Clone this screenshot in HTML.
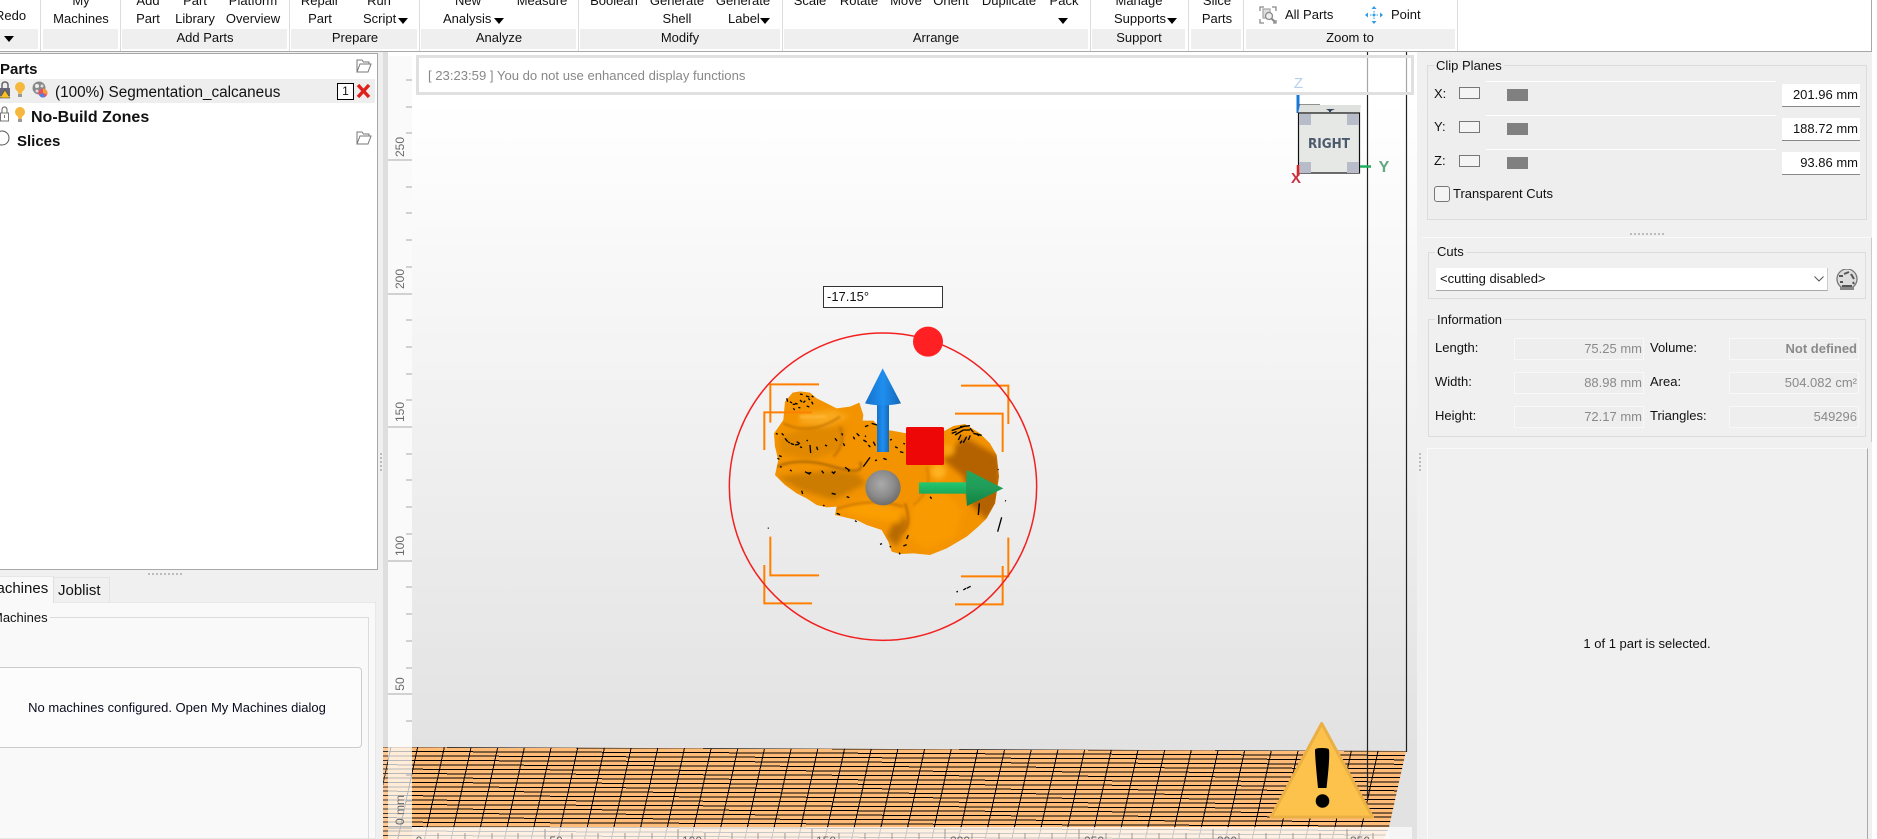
<!DOCTYPE html>
<html><head><meta charset="utf-8"><title>Magics</title>
<style>
html,body{margin:0;padding:0;background:#fff}
body{width:1877px;height:839px;position:relative;overflow:hidden;font-family:"Liberation Sans",sans-serif;font-size:13px;color:#111}
.a{position:absolute;box-sizing:border-box}
.t{position:absolute;white-space:nowrap;line-height:20px;height:20px}
.c{position:absolute;white-space:nowrap;line-height:20px;height:20px;width:400px;margin-left:-200px;text-align:center}
.s{position:absolute;top:29px;height:20px;background:#efefef}
.sep{position:absolute;top:0;height:51px;width:1px;background:#dcdcdc}
.arr{position:absolute;width:0;height:0;border-left:5px solid transparent;border-right:5px solid transparent;border-top:6px solid #000}
.g{position:absolute;box-sizing:border-box;border:1px solid #dcdcdc}
.lg{position:absolute;background:#eee;padding:0 2px;white-space:nowrap;line-height:16px;height:16px}
.vb{position:absolute;box-sizing:border-box;width:130px;height:22px;border:1px solid #f8f8f8;background:#eee;color:#8a8a8a;text-align:right;padding-right:1px;line-height:19px}
.inp{position:absolute;box-sizing:border-box;left:1782px;width:78px;height:23px;background:#fff;border-bottom:1px solid #888;text-align:right;padding-right:2px;line-height:22px}
.rt{position:absolute;transform:rotate(-90deg);transform-origin:center;font-size:12px;color:#6a6a6a;width:40px;height:14px;line-height:14px;text-align:center}
.dots{position:absolute;background-image:radial-gradient(circle,#aaa 0.8px,transparent 1px)}
</style></head><body>

<!-- toolbar -->
<div class="a" style="left:0;top:0;width:1872px;height:52px;background:#fff;border-bottom:1px solid #a8a8a8"></div>
<div class="a" style="left:1871px;top:0;width:1px;height:52px;background:#a8a8a8"></div>
<div class="s" style="left:0;width:38px"></div>
<div class="s" style="left:43px;width:75px"></div>
<div class="s" style="left:122px;width:165px"></div>
<div class="s" style="left:291px;width:126px"></div>
<div class="s" style="left:421px;width:155px"></div>
<div class="s" style="left:580px;width:200px"></div>
<div class="s" style="left:784px;width:304px"></div>
<div class="s" style="left:1092px;width:93px"></div>
<div class="s" style="left:1191px;width:50px"></div>
<div class="s" style="left:1246px;width:209px"></div>
<div class="sep" style="left:40px"></div><div class="sep" style="left:120px"></div><div class="sep" style="left:289px"></div><div class="sep" style="left:419px"></div><div class="sep" style="left:578px"></div><div class="sep" style="left:782px"></div><div class="sep" style="left:1090px"></div><div class="sep" style="left:1188px"></div><div class="sep" style="left:1243px"></div><div class="sep" style="left:1457px"></div>

<div class="t" style="left:-5px;top:6px">Redo</div><div class="arr" style="left:4px;top:36px"></div>
<div class="c" style="left:81px;top:-9px">My</div><div class="c" style="left:81px;top:9px">Machines</div>
<div class="c" style="left:148px;top:-9px">Add</div><div class="c" style="left:148px;top:9px">Part</div>
<div class="c" style="left:195px;top:-9px">Part</div><div class="c" style="left:195px;top:9px">Library</div>
<div class="c" style="left:253px;top:-9px">Platform</div><div class="c" style="left:253px;top:9px">Overview</div>
<div class="c" style="left:320px;top:-9px">Repair</div><div class="c" style="left:320px;top:9px">Part</div>
<div class="c" style="left:379px;top:-9px">Run</div><div class="t" style="left:363px;top:9px">Script</div><div class="arr" style="left:398px;top:18px"></div>
<div class="c" style="left:468px;top:-9px">New</div><div class="t" style="left:443px;top:9px">Analysis</div><div class="arr" style="left:494px;top:18px"></div>
<div class="c" style="left:542px;top:-9px">Measure</div>
<div class="c" style="left:614px;top:-9px">Boolean</div>
<div class="c" style="left:677px;top:-9px">Generate</div><div class="c" style="left:677px;top:9px">Shell</div>
<div class="c" style="left:743px;top:-9px">Generate</div><div class="t" style="left:728px;top:9px">Label</div><div class="arr" style="left:760px;top:18px"></div>
<div class="c" style="left:810px;top:-9px">Scale</div>
<div class="c" style="left:859px;top:-9px">Rotate</div>
<div class="c" style="left:906px;top:-9px">Move</div>
<div class="c" style="left:951px;top:-9px">Orient</div>
<div class="c" style="left:1009px;top:-9px">Duplicate</div>
<div class="c" style="left:1064px;top:-9px">Pack</div><div class="arr" style="left:1058px;top:18px"></div>
<div class="c" style="left:1139px;top:-9px">Manage</div><div class="t" style="left:1114px;top:9px">Supports</div><div class="arr" style="left:1167px;top:18px"></div>
<div class="c" style="left:1217px;top:-9px">Slice</div><div class="c" style="left:1217px;top:9px">Parts</div>
<div class="t" style="left:1285px;top:5px">All Parts</div>
<div class="t" style="left:1391px;top:5px">Point</div>
<svg class="a" style="left:1258px;top:5px" width="20" height="20" viewBox="0 0 20 20" fill="none" stroke="#8a8a8a" stroke-width="1.3"><path d="M2 6V2h4M14 2h4v4M2 14v4h4M18 15v3h-3"/><rect x="5" y="4" width="7" height="9" fill="#ddd" stroke="#aaa"/><circle cx="11" cy="11" r="3.5" fill="#eee"/><path d="M13.5 13.5l3.5 3.5" stroke-width="2"/></svg>
<svg class="a" style="left:1365px;top:6px" width="18" height="18" viewBox="0 0 18 18" fill="#2f9be8"><circle cx="9" cy="9" r="1.5"/><path d="M9 0l2.5 3h-5zM9 18l-2.5-3h5zM0 9l3-2.5v5zM18 9l-3 2.5v-5z"/><path d="M5 8.5h1.5v1H5zM11.500 8.500H13v1h-1.500zM8.500 5h1v1.500h-1zM8.500 11.500h1V13h-1z"/></svg>
<div class="c" style="left:205px;top:28px">Add Parts</div>
<div class="c" style="left:355px;top:28px">Prepare</div>
<div class="c" style="left:499px;top:28px">Analyze</div>
<div class="c" style="left:680px;top:28px">Modify</div>
<div class="c" style="left:936px;top:28px">Arrange</div>
<div class="c" style="left:1139px;top:28px">Support</div>
<div class="c" style="left:1350px;top:28px">Zoom to</div>

<!-- backgrounds -->
<div class="a" style="left:0;top:52px;width:383px;height:787px;background:#f0f0f0"></div>
<div class="a" style="left:1417px;top:52px;width:455px;height:787px;background:#f0f0f0"></div>

<!-- parts panel -->
<div class="a" style="left:0;top:53px;width:378px;height:517px;background:#fff;border-right:1px solid #a8a8a8;border-bottom:1px solid #a8a8a8;border-top:1px solid #a8a8a8"></div>
<div class="a" style="left:0;top:79px;width:375px;height:24px;background:#eee"></div>
<div class="t" style="left:0;top:60px;font-weight:bold;font-size:15px">Parts</div>
<div class="t" style="left:55px;top:83px;font-size:15.300px">(100%) Segmentation_calcaneus</div>
<div class="t" style="left:31px;top:108px;font-weight:bold;font-size:16px">No-Build Zones</div>
<div class="t" style="left:17px;top:132px;font-weight:bold;font-size:15px">Slices</div>
<div class="a" style="left:337px;top:83px;width:17px;height:17px;border:1px solid #000;background:#fff;text-align:center;line-height:15px;font-size:12px">1</div>
<svg class="a" style="left:356px;top:83px" width="15" height="16" viewBox="0 0 15 16"><path d="M2 2l11 12M13 2L2 14" stroke="#e0201c" stroke-width="3.4"/></svg>
<svg class="a" style="left:356px;top:59px" width="16" height="14" viewBox="0 0 16 14" fill="none" stroke="#777"><path d="M1 13V1h5l1.500 2H13v2M1 13h11l3-8H4z"/></svg>
<svg class="a" style="left:356px;top:131px" width="16" height="14" viewBox="0 0 16 14" fill="none" stroke="#777"><path d="M1 13V1h5l1.500 2H13v2M1 13h11l3-8H4z"/></svg>
<svg class="a" style="left:0;top:80px" width="50" height="22" viewBox="0 0 50 22">
<path d="M2 9V5q0-3 3-3t3 3v4" fill="none" stroke="#666" stroke-width="1.500"/><rect x="0" y="8" width="10" height="8" fill="#667"/><path d="M0 18l5-8 5 8z" fill="#f8c020" stroke="#333" stroke-width=".5"/>
<circle cx="20" cy="7" r="5" fill="#f5b83c"/><path d="M17.500 11h5l-1 3h-3z" fill="#f5b83c"/><rect x="18" y="14" width="4" height="3" fill="#999"/>
<circle cx="39" cy="8" r="6.500" fill="#888"/><circle cx="37" cy="6" r="2" fill="#eee"/><circle cx="42" cy="6" r="1.500" fill="#ddd"/><circle cx="37" cy="11" r="1.500" fill="#ddd"/><circle cx="43" cy="13" r="4.500" fill="#e8506a"/><path d="M43 13V8.500a4.500 4.500 0 0 1 4 6z" fill="#f0a030"/><path d="M43 13l-4 2a4.500 4.500 0 0 0 6 2z" fill="#5080e0"/>
</svg>
<svg class="a" style="left:0;top:104px" width="30" height="22" viewBox="0 0 30 22">
<path d="M2 9V6q0-3 2.500-3T7 6v3" fill="none" stroke="#777" stroke-width="1.200"/><rect x="0.500" y="9" width="8" height="8" fill="#fff" stroke="#777"/><rect x="4" y="11" width="1" height="3" fill="#777"/>
<circle cx="20" cy="8" r="5" fill="#f5b83c"/><path d="M17.500 12h5l-1 3h-3z" fill="#f5b83c"/><rect x="18" y="15" width="4" height="3" fill="#999"/>
</svg>
<svg class="a" style="left:0;top:128px" width="14" height="20" viewBox="0 0 14 20"><circle cx="2" cy="10" r="7" fill="#fff" stroke="#555"/></svg>

<!-- splitters -->
<div class="dots" style="left:147px;top:572px;width:37px;height:4px;background-size:4px 4px"></div>
<div class="dots" style="left:379px;top:452px;width:4px;height:20px;background-size:4px 4px"></div>
<div class="dots" style="left:1629px;top:232px;width:37px;height:4px;background-size:4px 4px"></div>
<div class="dots" style="left:1418px;top:452px;width:4px;height:20px;background-size:4px 4px"></div>

<!-- tabs -->
<div class="a" style="left:0;top:602px;width:376px;height:237px;background:#f9f9f9;border:1px solid #e8e8e8;border-left:0"></div>
<div class="a" style="left:0;top:576px;width:54px;height:27px;background:#f9f9f9;border-right:1px solid #e0e0e0;border-top:1px solid #e6e6e6"></div>
<div class="a" style="left:54px;top:577px;width:56px;height:25px;background:#f0f0f0;border-right:1px solid #e4e4e4;border-top:1px solid #e4e4e4"></div>
<div class="t" style="left:-16px;top:579px;font-size:15px">Machines</div>
<div class="t" style="left:58px;top:581px;font-size:15px">Joblist</div>
<div class="a" style="left:0;top:617px;width:369px;height:222px;border:1px solid #dcdcdc;border-left:0;border-bottom:0"></div>
<div class="t" style="left:-8px;top:608px;background:#f9f9f9;padding-right:2px;padding-left:0">Machines</div>
<div class="a" style="left:0;top:667px;width:362px;height:81px;background:#fcfcfc;border:1px solid #ccc;border-left:0;border-radius:0 4px 4px 0"></div>
<div class="c" style="left:177px;top:698px;color:#0a0a1e">No machines configured. Open My Machines dialog</div>

<!-- viewport -->
<div class="a" style="left:383px;top:52px;width:5px;height:787px;background:#dedede"></div>
<div class="a" style="left:388px;top:52px;width:1029px;height:787px;background:linear-gradient(#fff 0,#fff 50px,#e2e2e2 700px,#e2e2e2 100%)"></div>

<svg class="a" style="left:0;top:0" width="1877" height="839" viewBox="0 0 1877 839">
<defs>
<linearGradient id="bl" x1="0" x2="1" y1="0" y2="0"><stop offset="0" stop-color="#1670c8"/><stop offset=".5" stop-color="#1f8ff0"/><stop offset="1" stop-color="#1468b8"/></linearGradient>
<linearGradient id="gr" x1="0" x2="0" y1="0" y2="1"><stop offset="0" stop-color="#23c870"/><stop offset="1" stop-color="#1ca85a"/></linearGradient>
<linearGradient id="gc" x1="0" x2="0" y1="0" y2="1"><stop offset="0" stop-color="#23a860"/><stop offset=".5" stop-color="#209c58"/><stop offset="1" stop-color="#128040"/></linearGradient>
<radialGradient id="sp" cx=".45" cy=".4" r=".6"><stop offset="0" stop-color="#aaa"/><stop offset=".6" stop-color="#8c8c8c"/><stop offset="1" stop-color="#6e6e6e"/></radialGradient>
<clipPath id="blobc"><path d="M278 368L300 364 330 368 350 385 370 395 410 415 450 410 478 398 490 435 488 452 520 452 545 478 575 482 620 490 735 482 760 468 795 462 840 490 870 520 890 555 897 620 885 700 860 745 835 770 800 800 740 835 690 855 640 850 600 852 575 845 565 815 545 780 500 765 470 750 405 735 410 710 380 712 350 705 320 685 290 670 255 645 225 615 235 570 225 530 222 490 250 450 255 395Z"/></clipPath>
<filter id="bl6" x="-30%" y="-30%" width="160%" height="160%"><feGaussianBlur stdDeviation="8"/></filter>
<filter id="bl2" x="-30%" y="-30%" width="160%" height="160%"><feGaussianBlur stdDeviation="3"/></filter>
<clipPath id="gridc"><path d="M383 747L1406 751 1389 827 1384 839H383Z"/></clipPath>
</defs>
<!-- build plate -->
<g clip-path="url(#gridc)">
<rect x="383" y="745" width="1030" height="94" fill="#ffbb78"/>
<g stroke="#000" stroke-width="1" shape-rendering="crispEdges" fill="none">
<path d="M383 747L1406 751M383 751.400L1406 755.400M383 755.800L1406 759.800M383 760.300L1406 764.300M383 764.700L1406 768.700M383 769.100L1406 773.100M383 773.500L1406 777.500M383 777.900L1406 781.900M383 782.400L1406 786.400M383 786.800L1406 790.800M383 791.200L1406 795.200M383 795.600L1406 799.600M383 800L1406 804M383 804.500L1406 808.500M383 808.900L1406 812.900M383 813.300L1406 817.300M383 817.700L1406 821.700M383 822.100L1406 826.100M383 826.600L1406 830.600M383 831L1406 835M383 835.400L1406 839.400"/>
<path d="M391 747l-19.900 92M417.700 747l-19.900 92M444.400 747l-19.900 92M471.100 747l-19.900 92M497.800 747l-19.900 92M524.500 747l-19.900 92M551.200 747l-19.900 92M577.900 747l-19.900 92M604.600 747l-19.900 92M631.300 747l-19.900 92M658 747l-19.900 92M684.700 747l-19.900 92M711.400 747l-19.900 92M738.100 747l-19.900 92M764.800 747l-19.900 92M791.500 747l-19.900 92M818.200 747l-19.900 92M844.900 747l-19.900 92M871.600 747l-19.900 92M898.300 747l-19.900 92M925 747l-19.900 92M951.700 747l-19.900 92M978.400 747l-19.900 92M1005.100 747l-19.900 92M1031.800 747l-19.900 92M1058.500 747l-19.900 92M1085.200 747l-19.900 92M1111.900 747l-19.900 92M1138.600 747l-19.900 92M1165.300 747l-19.900 92M1192 747l-19.900 92M1218.700 747l-19.900 92M1245.400 747l-19.900 92M1272.100 747l-19.900 92M1298.800 747l-19.900 92M1325.500 747l-19.900 92M1352.200 747l-19.900 92M1378.900 747l-19.900 92"/>
</g>
</g>
<!-- build volume lines -->
<path d="M1367.500 52V800" stroke="#222" stroke-width="1.200"/>
<path d="M1406.500 52V752" stroke="#222" stroke-width="1.200"/>

<!-- rulers -->
<rect x="388" y="56" width="24" height="691" fill="#fafafa"/>
<rect x="388" y="747" width="24" height="92" fill="#fff" fill-opacity=".72"/>
<rect x="383" y="747" width="5" height="92" fill="#fff" fill-opacity=".2"/>
<rect x="412" y="827" width="1000" height="12" fill="#fff" fill-opacity=".78"/>
<rect x="1389" y="827" width="23" height="12" fill="#f5f5f5"/>
<path d="M406 80H412M406 107H412M406 133H412M388 160H412M406 187H412M406 213H412M406 240H412M406 267H412M388 294H412M406 320H412M406 347H412M406 374H412M406 400H412M388 427H412M406 454H412M406 480H412M406 507H412M406 534H412M388 561H412M406 587H412M406 614H412M406 641H412M406 668H412M388 694H412M406 721H412M406 775H412M406 801H412M388 828H412" stroke="#a8a8a8" stroke-width="1"/>
<path d="M438 833V839M465 833V839M492 833V839M518 833V839M545 829V839M572 833V839M598 833V839M625 833V839M652 833V839M678 829V839M705 833V839M732 833V839M758 833V839M785 833V839M812 829V839M839 833V839M865 833V839M892 833V839M919 833V839M945 829V839M972 833V839M999 833V839M1025 833V839M1052 833V839M1079 829V839M1106 833V839M1132 833V839M1159 833V839M1186 833V839M1213 829V839M1239 833V839M1266 833V839M1293 833V839M1320 833V839M1347 829V839M1373 833V839" stroke="#999" stroke-width="1"/>
<text x="419" y="845" font-size="12" fill="#666" font-family="Liberation Sans" text-anchor="middle">0</text>
<text x="556" y="845" font-size="12" fill="#666" font-family="Liberation Sans" text-anchor="middle">50</text>
<text x="692" y="845" font-size="12" fill="#666" font-family="Liberation Sans" text-anchor="middle">100</text>
<text x="826" y="845" font-size="12" fill="#666" font-family="Liberation Sans" text-anchor="middle">150</text>
<text x="960" y="845" font-size="12" fill="#666" font-family="Liberation Sans" text-anchor="middle">200</text>
<text x="1094" y="845" font-size="12" fill="#666" font-family="Liberation Sans" text-anchor="middle">250</text>
<text x="1227" y="845" font-size="12" fill="#666" font-family="Liberation Sans" text-anchor="middle">300</text>
<text x="1360" y="845" font-size="12" fill="#666" font-family="Liberation Sans" text-anchor="middle">350</text>

<!-- model & gizmo in zoom coords -->
<g transform="translate(700 270) scale(.33333)">
<g clip-path="url(#blobc)">
<rect x="200" y="350" width="720" height="520" fill="#f39300"/>
<g filter="url(#bl6)">
<path d="M790 500L900 560 900 700 860 750 810 700 790 620 730 570Z" fill="#b46200"/>
<path d="M230 620L400 600 470 610 500 640 400 690 300 660Z" fill="#cc7c00"/>
<path d="M240 500L330 470 440 470 420 540 330 570 240 550Z" fill="#e08800"/>
<path d="M560 800L600 720 625 760 590 830Z" fill="#b86a00"/>
<path d="M640 700L720 650 790 720 770 800 680 840 620 800Z" fill="#f89a00"/>
<path d="M300 430L400 420 450 440 380 470 300 460Z" fill="#f9a81c"/>
<circle cx="715" cy="605" r="22" fill="#ffb424"/>
<circle cx="745" cy="540" r="18" fill="#fba410"/>
<path d="M410 720L500 690 610 720 600 760 470 740Z" fill="#fb9e00"/>
</g>
<g filter="url(#bl2)" fill="none">
<path d="M230 590Q300 560 400 590T480 575" stroke="#b86e00" stroke-width="8"/>
<path d="M250 460Q330 500 420 440" stroke="#c97800" stroke-width="6"/>
<path d="M420 470Q440 520 400 560" stroke="#c87400" stroke-width="7"/>
<path d="M400 720Q510 680 610 710" stroke="#d07a00" stroke-width="7"/>
<path d="M615 700Q640 770 600 790" stroke="#c06c00" stroke-width="7"/>
<path d="M680 590Q700 660 640 705" stroke="#d88000" stroke-width="6"/>
<path d="M300 440H380" stroke="#ffb838" stroke-width="7"/>
</g>
</g>
<path d="M270 395l6 4M285 400l8 2M300 390l6 6M318 378l10 3M335 395l4 8M320 408l8 3M280 415l4 5M295 412l6 2M260 385l3 10M300 372l8 2M335 378l5 3M278 403h8M310 398l6-6M325 385l5 5
M245 490l6 6M255 505l8 10M272 520l10 4M290 515l10 6M300 530l6 3M330 525l2 24M350 530l3 10M375 525l6 3M405 505l6 8M430 520l4 8M425 490l3 6M470 490l8 8M490 510l10 6M520 515l6 12M515 460l20 6M495 470l10-4M550 520l8 6M585 530l8 4M600 545l10 3M570 510l6-2M228 490l5 3M265 515l4 4M285 525l12-2M320 510l3 3M460 500l4 8M505 525l6 6M540 505l5 5M610 520l5 2M495 500l3-3
M755 482l40-14M765 495l25-15M790 480l20 0M810 475l10 12M820 490l25 6M775 510l8-16M800 500l-10 18M805 510l6-14M830 490l6 8M780 520l6-8M755 490l15-5M780 470l30-3
M315 605l15 8M365 602l6 8M395 605l8 6M435 592l12 8M270 600l5 3M490 590l20-28M525 572l6-2M550 565l10 4M305 662l3 10M395 670l12 3M440 680l8 3M370 705l3 3M410 730l10 4M465 752l5 3M690 680l5 6M322 610l12-2M400 612l6-8M445 605l4-6M232 565l6 3
M625 795l-5 12M610 828l10-4M598 848l2 5M540 823l6-2M570 828l2 4M205 773l0 3M838 700l-3 35M905 742l-12 43M915 692l3 1M893 598l3 1M770 967l3-4M790 960l8-5M800 955l12-6M245 560l-8-3M240 590l5 1" stroke="#000" stroke-width="4" fill="none"/>
<g fill="none" stroke="#ff8000" stroke-width="6">
<path d="M357 343H211V458M335 427H193V540M783 347H925V462M765 431H908V546M211 800V916H357M193 885V1000H336M925 803V919H783M908 888V1003H765"/>
</g>
<circle cx="549" cy="650" r="461" fill="none" stroke="#f22020" stroke-width="4.500"/>
<circle cx="684" cy="215" r="45" fill="#ff2024"/>
<rect x="531" y="400" width="36" height="146" fill="url(#bl)"/>
<path d="M548 295L603 400Q548 412 495 400Z" fill="url(#bl)"/>
<rect x="618" y="471" width="114" height="114" rx="5" fill="#ee0707"/>
<circle cx="549" cy="653" r="53" fill="url(#sp)"/>
<rect x="657" y="637" width="150" height="34" fill="url(#gr)"/>
<path d="M801 600L910 655 801 708Q795 654 801 600Z" fill="url(#gc)"/>
</g>

<!-- nav cube -->
<path d="M1298 95V113" stroke="#1a78d8" stroke-width="3"/>
<path d="M1299 105H1320" stroke="#222" stroke-width="1"/>
<path d="M1298 113L1300 105H1361L1360 113Z" fill="#dfe1df"/>
<rect x="1298.500" y="113" width="61" height="60" fill="#e6e8e6" stroke="#111" stroke-width="1.200"/>
<path d="M1299 114h12v11h-12zM1347 114h12v11h-12zM1299 162h12v11h-12zM1347 162h12v11h-12z" fill="#b8bcc8"/>
<path d="M1326 109h9l-4 2v1h-2v-1z" fill="#34465a"/>
<path d="M1360 166.500h11" stroke="#20b060" stroke-width="2.500"/>
<path d="M1298 165V176" stroke="#e02020" stroke-width="2.500"/>
<text x="1329" y="148" font-size="13.500" font-weight="bold" fill="#4a5a6c" font-family="DejaVu Sans" text-anchor="middle" textLength="42" lengthAdjust="spacingAndGlyphs">RIGHT</text>
<text x="1298.500" y="178" font-size="0" fill="#000"> </text>
<text x="1384" y="172" font-size="16" font-weight="bold" fill="#62a882" font-family="Liberation Sans" text-anchor="middle">Y</text>
<text x="1296" y="183" font-size="15" font-weight="bold" fill="#cc3040" font-family="Liberation Sans" text-anchor="middle">X</text>

<!-- warning triangle -->
<path d="M1321.700 723.500L1372.500 817H1271Z" fill="#fdc24c" stroke="#eab044" stroke-width="3" stroke-linejoin="round"/>
<path d="M1315 750Q1315 748 1322 748T1329 750Q1330 758 1326.500 788H1318Q1315 758 1315 750Z" fill="#000"/>
<circle cx="1322.500" cy="801" r="6.800" fill="#000"/>

<!-- refresh icon -->
<g transform="translate(1838 186)" fill="none" stroke="#2bb44e" stroke-width="3">
<path d="M3 8A7.500 7.500 0 0 1 16 4.500"/><path d="M17 11A7.500 7.500 0 0 1 4 14.500"/>
<path d="M13.500 7H19.500V1Z" fill="#2bb44e" stroke="none"/><path d="M6.500 12H.5V18Z" fill="#2bb44e" stroke="none"/>
</g>
</svg>

<!-- message box -->
<div class="a" style="left:416px;top:55px;width:998px;height:40px;border:3px solid #e0e0e0;background:rgba(255,255,255,.6)"></div>
<div class="t" style="left:428px;top:66px;color:#888;font-size:13.100px">[ 23:23:59 ] You do not use enhanced display functions</div>
<svg class="a" style="left:1290px;top:72px" width="18" height="20"><text x="8.500" y="16" font-size="15" fill="#b4d0ec" font-family="Liberation Sans" text-anchor="middle">Z</text></svg>
<!-- angle -->
<div class="a" style="left:823px;top:286px;width:120px;height:22px;border:1px solid #333;background:#fff;padding-left:3px;line-height:20px">-17.15°</div>
<!-- ruler labels -->
<div class="rt" style="left:380px;top:140px">250</div>
<div class="rt" style="left:380px;top:272px">200</div>
<div class="rt" style="left:380px;top:405px">150</div>
<div class="rt" style="left:380px;top:539px">100</div>
<div class="rt" style="left:380px;top:677px">50</div>
<div class="rt" style="left:380px;top:803px">0 mm</div>

<!-- clip planes -->
<div class="g" style="left:1427px;top:65px;width:440px;height:155px;background:#eee"></div>
<div class="lg" style="left:1434px;top:58px">Clip Planes</div>
<div class="t" style="left:1434px;top:84px">X:</div><div class="t" style="left:1434px;top:117px">Y:</div><div class="t" style="left:1434px;top:151px">Z:</div>
<div class="a" style="left:1459px;top:87px;width:21px;height:12px;border:1px solid #777;background:#f4f4f4"></div>
<div class="a" style="left:1459px;top:121px;width:21px;height:12px;border:1px solid #777;background:#f4f4f4"></div>
<div class="a" style="left:1459px;top:155px;width:21px;height:12px;border:1px solid #777;background:#f4f4f4"></div>
<div class="a" style="left:1486px;top:81px;width:290px;height:1px;background:#fff"></div>
<div class="a" style="left:1486px;top:115px;width:290px;height:1px;background:#fff"></div>
<div class="a" style="left:1486px;top:149px;width:290px;height:1px;background:#fff"></div>
<div class="a" style="left:1507px;top:89px;width:21px;height:12px;background:#808080"></div>
<div class="a" style="left:1507px;top:123px;width:21px;height:12px;background:#808080"></div>
<div class="a" style="left:1507px;top:157px;width:21px;height:12px;background:#808080"></div>
<div class="inp" style="top:84px">201.96 mm</div>
<div class="inp" style="top:118px">188.72 mm</div>
<div class="inp" style="top:152px">93.86 mm</div>
<div class="a" style="left:1434px;top:186px;width:16px;height:16px;border:1px solid #777;border-radius:3px;background:#f4f4f4"></div>
<div class="t" style="left:1453px;top:184px">Transparent Cuts</div>

<!-- cuts / info -->
<div class="a" style="left:1422px;top:237px;width:450px;height:205px;background:#f0f0f0;border-top:1px solid #fafafa;border-right:1px solid #ccc"></div>
<div class="g" style="left:1428px;top:252px;width:438px;height:47px"></div>
<div class="lg" style="left:1435px;top:244px;background:#f0f0f0">Cuts</div>
<div class="a" style="left:1436px;top:268px;width:392px;height:23px;background:#fff;border-bottom:1px solid #aaa;border-right:1px solid #ccc;padding-left:4px;line-height:22px">&lt;cutting disabled&gt;</div>
<svg class="a" style="left:1813px;top:275px" width="12" height="8" viewBox="0 0 12 8" fill="none" stroke="#555"><path d="M1.500 1.500L6 6l4.500-4.500"/></svg>
<div class="g" style="left:1428px;top:319px;width:438px;height:118px"></div>
<div class="lg" style="left:1435px;top:312px;background:#f0f0f0">Information</div>
<div class="t" style="left:1435px;top:338px">Length:</div><div class="t" style="left:1435px;top:372px">Width:</div><div class="t" style="left:1435px;top:406px">Height:</div>
<div class="t" style="left:1650px;top:338px">Volume:</div><div class="t" style="left:1650px;top:372px">Area:</div><div class="t" style="left:1650px;top:406px">Triangles:</div>
<div class="vb" style="left:1514px;top:338px">75.25 mm</div>
<div class="vb" style="left:1514px;top:372px">88.98 mm</div>
<div class="vb" style="left:1514px;top:406px">72.17 mm</div>
<div class="vb" style="left:1729px;top:338px;font-weight:bold">Not defined</div>
<div class="vb" style="left:1729px;top:372px">504.082 cm²</div>
<div class="vb" style="left:1729px;top:406px">549296</div>
<svg class="a" style="left:1836px;top:269px" width="24" height="24" viewBox="0 0 24 24" fill="none"><circle cx="11" cy="10" r="10" fill="#ddd" stroke="#777" stroke-width="1.300"/><path d="M3 7h4M8 5l5-2M15 5l3 5M4 13h3M17 13l1 2M6 17h10" stroke="#555" stroke-width="2"/><rect x="4" y="18" width="14" height="3" fill="#888"/></svg>

<!-- selection panel -->
<div class="a" style="left:1427px;top:448px;width:441px;height:391px;background:#f0f0f0;border-top:1px solid #fafafa;border-left:1px solid #fafafa;border-right:1px solid #aaa"></div>
<div class="c" style="left:1647px;top:634px">1 of 1 part is selected.</div>
</body></html>
